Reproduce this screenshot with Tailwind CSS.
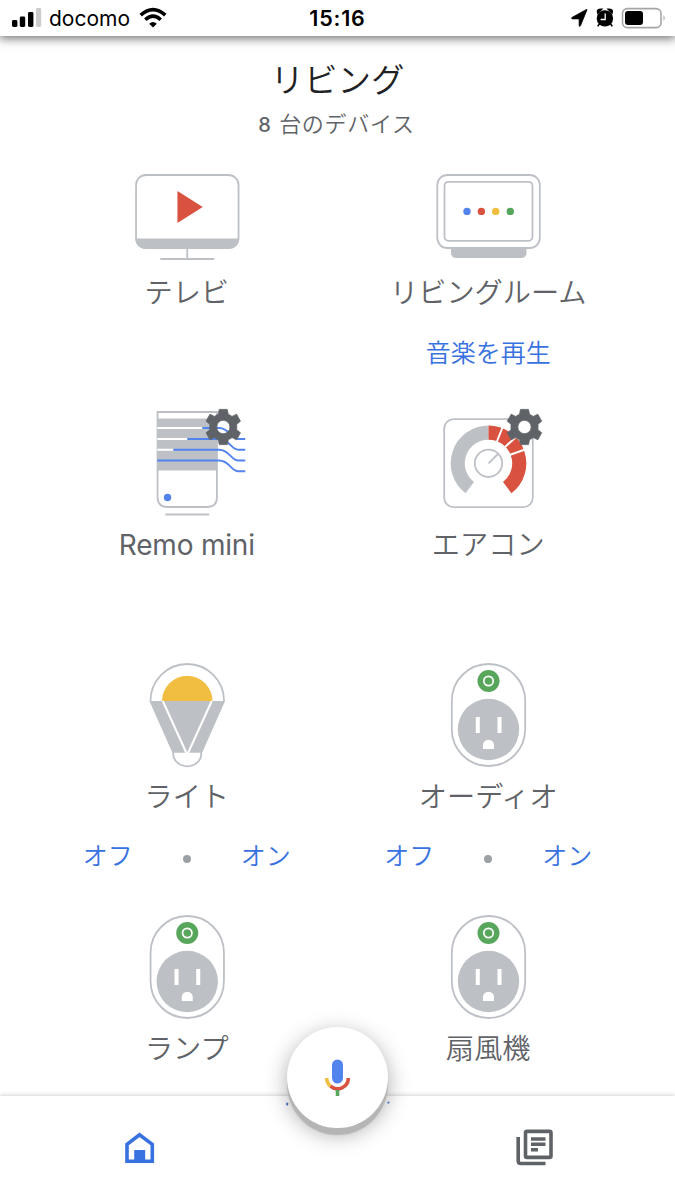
<!DOCTYPE html>
<html lang="ja">
<head>
<meta charset="utf-8">
<title>リビング</title>
<script src="https://cdn.jsdelivr.net/npm/@tailwindcss/browser@4"></script>
</head>
<body class="bg-white">
<svg width="0" height="0" class="hidden">
  <defs>
    <g id="outlet">
      <rect x="-36.7" y="4" width="73.4" height="102" rx="36.7" fill="#fff" stroke="#bdc1c6" stroke-width="1.8"/>
      <circle cx="0" cy="21" r="11" fill="#57a65b"/>
      <circle cx="0" cy="21" r="4.7" fill="none" stroke="#fff" stroke-width="1.7"/>
      <circle cx="0" cy="69.5" r="30.7" fill="#bdc1c6"/>
      <path d="M-12.7 57h4v16h-4zM9 57h4v16h-4zM-5.5 89v-4a5.5 5.2 0 0 1 11 0v4z" fill="#fff"/>
    </g>
    <path id="gear" fill="#5f6368" fill-rule="evenodd" stroke="#5f6368" stroke-width=".8" stroke-linejoin="round" d="M-4-17.6H4L5-12.8L8.8-10.6L13.3-12.8L17.2-5.8L13.5-2.8V2.8L17.2 5.8L13.3 12.8L8.8 10.6L5 12.8L4 17.6H-4L-5 12.8L-8.8 10.6L-13.3 12.8L-17.2 5.8L-13.5 2.8V-2.8L-17.2-5.8L-13.3-12.8L-8.8-10.6L-5-12.8ZM0-6.7A6.7 6.7 0 1 0 0 6.7A6.7 6.7 0 1 0 0-6.7Z"/>
  </defs>
</svg>
<div class="relative flex h-[1200px] w-[675px] flex-col overflow-hidden bg-white font-['Noto_Sans_CJK_JP',sans-serif] font-[350] text-[#5f6368]">
  <header class="relative z-10 flex h-9 shrink-0 items-center bg-white font-['Inter','Noto_Sans_CJK_JP',sans-serif] font-normal text-black shadow-[0_1px_10px_1px_rgba(0,0,0,0.6)]">
    <div class="flex flex-1 items-center pl-[11px]">
      <svg width="31" height="22" viewBox="0 0 31 22"><rect x="1" y="13" width="5.4" height="7" rx="1.4"/><rect x="8.8" y="9.5" width="5.4" height="10.5" rx="1.4"/><rect x="17" y="5" width="5.4" height="15" rx="1.4"/><rect x="25" y="1" width="5.2" height="19" rx="1.4" fill="#ccc"/></svg>
      <span class="ml-[7px] w-[83px] pt-px text-[21px] leading-9">docomo</span>
      <svg class="ml-[6px]" width="30" height="22" viewBox="0 0 30 22" fill="none" stroke="#000"><path d="M2.7 8.2Q15-2.9 27.3 8.2" stroke-width="3.6"/><path d="M7.3 12.8Q15 5.6 22.7 12.8" stroke-width="3.5"/><path d="M11.2 16.7Q15 13.5 18.8 16.7L15 20.5z" fill="#000" stroke="none"/></svg>
    </div>
    <span class="flex w-[60px] justify-center whitespace-nowrap pr-[3px] text-[21.5px] font-semibold leading-9 tracking-[0.8px]">15:16</span>
    <div class="flex flex-1 justify-end pr-2">
      <svg width="97" height="26" viewBox="0 0 97 26"><path d="M17.5 5.2 11 21Q10.4 22.4 9.6 21V14.2H2.8Q1 13.5 2.7 12.6L16 5.2Q18 4.1 17.5 5.2Z" transform="translate(-.5 -.3)" stroke="#000" stroke-width=".7"/><circle cx="34.9" cy="13.4" r="8.2"/><path d="M27.8 8Q26.4 4 31.5 4.3ZM42 8Q43.4 4 38.3 4.3ZM30 18l-2.3 3.4M40 18l2.3 3.4" stroke="#000" stroke-width="1.6"/><path d="M35.2 8.5v6h-4.6" fill="none" stroke="#fff" stroke-width="1.3"/><rect x="52.5" y="3.6" width="38.5" height="19" rx="4.8" fill="none" stroke="#a5a5a5" stroke-width="1.6"/><rect x="55" y="6" width="18" height="14" rx="3"/><path d="M93.5 10q2.4 3 0 6z" fill="#a5a5a5"/></svg>
    </div>
  </header>

  <main class="flex flex-col items-center">
    <h1 class="mt-[20px] h-[44px] whitespace-nowrap text-[33.5px] leading-[44px] text-[#202124]">リビング</h1>
    <p class="mt-[6px] h-[32px] whitespace-nowrap pr-0.5 text-[22px] leading-[32px] tracking-[0.7px]"><span class="mr-[2px] font-['Inter'] text-[20px] font-medium">8</span> 台のデバイス</p>
    <div class="mt-[18px] grid w-[603px] grid-cols-2 auto-rows-[252px] text-[28.2px]">
      <section class="flex flex-col items-center">
        <svg class="h-28 w-[150px] shrink-0" viewBox="-75.25 0 150 112"><rect x="-51.2" y="19" width="102.5" height="73" rx="10" fill="#fff" stroke="#bdc1c6" stroke-width="1.8"/><path d="M-52 82.5H52A10.5 10.5 0 0 1 41.5 93H-41.5A10.5 10.5 0 0 1-52 82.5Z" fill="#bdc1c6"/><path d="M-9.8 35V67L15.5 51Z" fill="#d9513f"/><path d="M0 93V103M-27 103H27" stroke="#bdc1c6" stroke-width="1.8"/></svg>
        <h2 class="h-12 whitespace-nowrap leading-[46px]">テレビ</h2>
      </section>
      <section class="flex flex-col items-center">
        <svg class="h-28 w-[150px] shrink-0" viewBox="-75.5 0 150 112"><path d="M-37.5 92H38V96.5Q38 102 32.5 102H-32Q-37.5 102-37.5 96.5Z" fill="#bdc1c6"/><rect x="-51.2" y="19" width="102.5" height="73" rx="10" fill="#fff" stroke="#bdc1c6" stroke-width="1.8"/><rect x="-44" y="25.8" width="88" height="59" rx="4" fill="none" stroke="#bdc1c6" stroke-width="1.8"/><circle cx="-21.5" cy="55.4" r="3.7" fill="#5383ec"/><circle cx="-7.1" cy="55.4" r="3.7" fill="#d9513f"/><circle cx="7.2" cy="55.4" r="3.7" fill="#f1be42"/><circle cx="21.8" cy="55.4" r="3.7" fill="#57a65b"/></svg>
        <h2 class="h-12 whitespace-nowrap leading-[46px]">リビングルーム</h2>
        <div class="flex h-[72px] items-center text-[25px] text-[#3871e0]">音楽を再生</div>
      </section>

      <section class="flex flex-col items-center">
        <svg class="h-28 w-[150px] shrink-0 overflow-visible" viewBox="-75.25 0 150 112"><path d="M-29.7 4H29.7V89Q29.7 99 19.7 99H-19.7Q-29.7 99-29.7 89Z" fill="#fff" stroke="#bdc1c6" stroke-width="1.8"/><path d="M-30 10.5H30V62.5H-30Z" fill="#bdc1c6"/><path d="M-30 20H16M-30 31H2M-30 41.7H-13" stroke="#fff" stroke-width="2"/><g fill="none" stroke="#5383ec" stroke-width="1.9"><path d="M15 20H32C42 20 44 31 51 31H58"/><path d="M0 31H32C42 31 44 41.7 51 41.7H58"/><path d="M-14 41.7H32C42 41.7 44 52.5 51 52.5H58"/><path d="M-30 52.5H32C42 52.5 44 63.3 51 63.3H58"/></g><circle cx="-19.7" cy="89.5" r="3.7" fill="#5383ec"/><path d="M-22 106.5H22" stroke="#bdc1c6" stroke-width="1.8"/><use href="#gear" x="36" y="19"/></svg>
        <h2 class="h-12 whitespace-nowrap font-['Inter'] text-[28px] font-normal leading-[51px] tracking-[-0.2px]">Remo mini</h2>
      </section>
      <section class="flex flex-col items-center">
        <svg class="h-28 w-[150px] shrink-0 overflow-visible" viewBox="-75.5 0 150 112"><rect x="-44.3" y="11.2" width="88.6" height="88" rx="9.5" fill="#fff" stroke="#bdc1c6" stroke-width="1.8"/><path d="M0 17.5A37.8 37.8 0 0 0-23 85.3L-14.5 74A23.6 23.6 0 0 1 0 31.7Z" fill="#bdc1c6"/><path d="M0 17.5A37.8 37.8 0 0 1 23 85.3L14.5 74A23.6 23.6 0 0 0 0 31.7Z" fill="#d9513f"/><path d="M8 34.5L15 17M16 39.5L28.5 28M21 47L38 41" stroke="#fff" stroke-width="2"/><circle cy="55.3" r="13.7" fill="none" stroke="#bdc1c6" stroke-width="1.8"/><path d="M0 55.3L9.5 46" stroke="#bdc1c6" stroke-width="1.8"/><use href="#gear" x="36" y="19"/></svg>
        <h2 class="h-12 whitespace-nowrap leading-[46px]">エアコン</h2>
      </section>

      <section class="flex flex-col items-center">
        <svg class="h-28 w-[150px] shrink-0" viewBox="-75.25 0 150 112"><path d="M-36.8 41A36.8 37 0 0 1 36.8 41L14 92.5V94A14 12.3 0 0 1-14 94V92.5Z" fill="#fff" stroke="#bdc1c6" stroke-width="1.8"/><path d="M-37 41H37L14.5 92.8H-14.5Z" fill="#bdc1c6"/><path d="M-25.2 41A25.2 25.2 0 0 1 25.2 41Z" fill="#f1be42"/><path d="M-24.5 41L-.8 93M24.5 41L.8 93" stroke="#fff" stroke-width="2"/></svg>
        <h2 class="h-12 whitespace-nowrap leading-[46px]">ライト</h2>
        <div class="flex h-[70px] w-[208px] items-center justify-between text-[25px] text-[#3871e0]"><span>オフ</span><i class="mt-[8px] size-[8px] rounded-full bg-[#9aa0a6]"></i><span>オン</span></div>
      </section>
      <section class="flex flex-col items-center">
        <svg class="h-28 w-[150px] shrink-0" viewBox="-75.5 0 150 112"><use href="#outlet"/></svg>
        <h2 class="h-12 whitespace-nowrap leading-[46px]">オーディオ</h2>
        <div class="flex h-[70px] w-[208px] items-center justify-between text-[25px] text-[#3871e0]"><span>オフ</span><i class="mt-[8px] size-[8px] rounded-full bg-[#9aa0a6]"></i><span>オン</span></div>
      </section>

      <section class="flex flex-col items-center">
        <svg class="h-28 w-[150px] shrink-0" viewBox="-75.25 0 150 112"><use href="#outlet"/></svg>
        <h2 class="h-12 whitespace-nowrap leading-[46px]">ランプ</h2>
      </section>
      <section class="flex flex-col items-center">
        <svg class="h-28 w-[150px] shrink-0" viewBox="-75.5 0 150 112"><use href="#outlet"/></svg>
        <h2 class="h-12 whitespace-nowrap leading-[46px]">扇風機</h2>
      </section>
    </div>
  </main>

  <nav class="absolute inset-x-0 bottom-0 flex h-[104px] items-center justify-between bg-white px-[121px] shadow-[0_-1px_4px_rgba(0,0,0,0.18)]">
    <svg width="36" height="40" viewBox="0 -1 36 40"><path d="M6 32.2V15.3L18.5 5.7L31.3 15.3V32.2Z" fill="none" stroke="#3871e0" stroke-width="3.6"/><path d="M13.2 21H24.2V33H13.2Z" fill="#3871e0"/></svg>
    <svg class="overflow-visible" width="38" height="40" viewBox="0.5 0 38 40" fill="none" stroke="#5f6368"><rect x="10" y="3.4" width="25.5" height="26" rx="1.5" stroke-width="3.6"/><path d="M2.7 9V32.8Q2.7 35.5 5.4 35.5H30" stroke-width="3.6"/><path d="M15.5 11H30M15.5 16.3H30M15.5 21.8H22.5" stroke-width="3.6"/></svg>
  </nav>
  <div class="absolute left-[287px] top-[1027px] size-[101px] rounded-full bg-white shadow-[0_7px_1px_#b5b5b5,0_6px_22px_rgba(0,0,0,0.34)]">
    <svg class="overflow-visible" width="101" height="101" viewBox="0 0 101 101"><rect x="45" y="32.5" width="11" height="24" rx="5.5" fill="#5383ec"/><g fill="none" stroke-width="3.6"><path d="M39.7 51A10.8 10.8 0 0 0 43.5 59.2" stroke="#f1be42"/><path d="M43.5 59.2A10.8 10.8 0 0 0 61.3 51" stroke="#d9513f"/><path d="M50.5 63V69" stroke="#57a65b"/></g><path d="M-.7 75.5l2 .5-.3 2.5-1.7-.3zM100.5 74.8h2.2l-.7 1.8h-1.5z" fill="#3465b8"/></svg>
  </div>
</div>
</body>
</html>
